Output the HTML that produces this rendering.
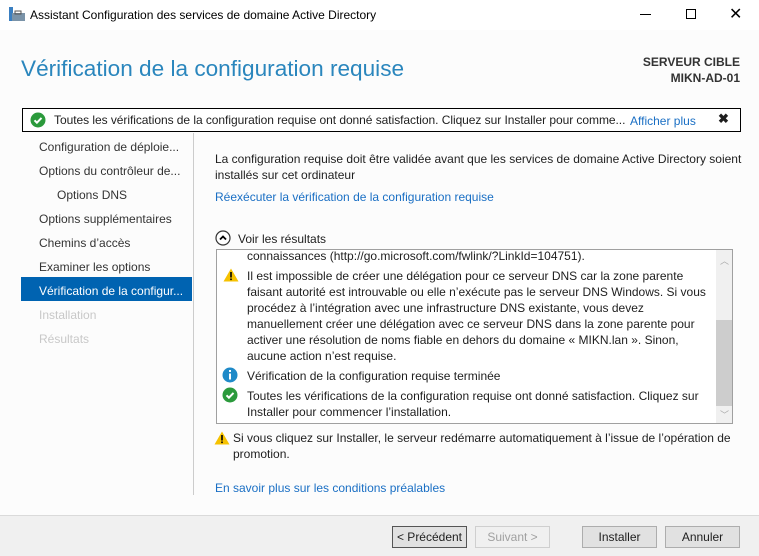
<!DOCTYPE html>
<html><head><meta charset="utf-8"><style>
*{margin:0;padding:0;box-sizing:border-box}
body{width:759px;height:556px;overflow:hidden;background:#fcfcfc;font-family:"Liberation Sans",sans-serif;font-size:12px;color:#1e1e1e;position:relative}
.a{position:absolute;white-space:nowrap}
.link{color:#1a6fc4}
.nav{position:absolute;left:39px;font-size:12px;color:#333}
.btn{position:absolute;top:526px;height:22px;border:1px solid #adadad;background:#e1e1e1;text-align:center;line-height:20px;font-size:12px}
.res{position:absolute;left:247px;font-size:12px;line-height:16px;color:#1e1e1e}
</style></head><body>
<div class="a" style="left:0;top:0;width:759px;height:30px;background:#fff"></div>
<svg class="a" style="left:9px;top:7px" width="18" height="16"><rect x="0" y="0" width="4" height="14" fill="#3a7fc1"/><rect x="3" y="6" width="13" height="8" fill="#7a93a8"/><rect x="6" y="4" width="6" height="3" fill="none" stroke="#555" stroke-width="1"/></svg>
<div class="a" style="left:30px;top:8px;font-size:12px;color:#000">Assistant Configuration des services de domaine Active Directory</div>
<div class="a" style="left:640px;top:14px;width:11px;height:1px;background:#000"></div>
<div class="a" style="left:686px;top:9px;width:10px;height:10px;border:1px solid #000"></div>
<div class="a" style="left:729px;top:4px;font-size:16px;color:#000">✕</div>

<div class="a" style="left:21px;top:56px;font-size:22.6px;color:#2a86bd">Vérification de la configuration requise</div>
<div class="a" style="right:19px;top:54px;font-weight:bold;color:#333;text-align:right;line-height:16px">SERVEUR CIBLE<br>MIKN-AD-01</div>

<div class="a" style="left:22px;top:108px;width:719px;height:24px;border:1px solid #000;background:#fff"></div>
<svg class="a" style="left:30px;top:112px" width="16" height="16"><circle cx="8" cy="8" r="7.5" fill="#2b9a3c"/><path d="M4.5 8.3l2.4 2.4 4.6-4.8" stroke="#fff" stroke-width="2" fill="none"/></svg>
<div class="a" style="left:54px;top:113px;letter-spacing:-0.05px">Toutes les vérifications de la configuration requise ont donné satisfaction. Cliquez sur Installer pour comme...</div>
<div class="a link" style="left:629px;top:114px;background:#fff;padding-left:1px">Afficher plus</div>
<div class="a" style="left:718px;top:111px;font-size:13px;font-weight:bold">✖</div>

<div class="nav" style="top:140px">Configuration de déploie...</div>
<div class="nav" style="top:164px">Options du contrôleur de...</div>
<div class="nav" style="top:188px;left:57px">Options DNS</div>
<div class="nav" style="top:212px">Options supplémentaires</div>
<div class="nav" style="top:236px">Chemins d’accès</div>
<div class="nav" style="top:260px">Examiner les options</div>
<div class="a" style="left:21px;top:277px;width:171px;height:24px;background:#0063b1"></div>
<div class="nav" style="top:284px;color:#fff">Vérification de la configur...</div>
<div class="nav" style="top:308px;color:#c8c8c8">Installation</div>
<div class="nav" style="top:332px;color:#c8c8c8">Résultats</div>
<div class="a" style="left:193px;top:133px;width:1px;height:362px;background:#ccc"></div>

<div class="a" style="left:215px;top:151px;line-height:16px;white-space:normal;width:530px">La configuration requise doit être validée avant que les services de domaine Active Directory soient installés sur cet ordinateur</div>
<div class="a link" style="left:215px;top:190px">Réexécuter la vérification de la configuration requise</div>

<svg class="a" style="left:215px;top:230px" width="16" height="16"><circle cx="8" cy="8" r="7" fill="#fff" stroke="#333" stroke-width="1.2"/><path d="M5 9.5l3-3 3 3" stroke="#000" stroke-width="1.8" fill="none"/></svg>
<div class="a" style="left:238px;top:232px">Voir les résultats</div>

<div class="a" style="left:216px;top:249px;width:517px;height:175px;border:1px solid #a0a0a0;background:#fff;overflow:hidden"></div>
<div class="a" style="left:716px;top:250px;width:16px;height:173px;background:#f0f0f0"></div>
<div class="a" style="left:716px;top:320px;width:16px;height:86px;background:#cdcdcd"></div>
<div class="a" style="left:720px;top:254px;font-size:9px;color:#aaa">︿</div>
<div class="a" style="left:720px;top:408px;font-size:9px;color:#aaa">﹀</div>
<div class="res" style="top:248px">connaissances (http://go.microsoft.com/fwlink/?LinkId=104751).</div>
<svg class="a" style="left:223px;top:268px" width="16" height="14"><path d="M8 0.5L15.5 13.5H0.5Z" fill="#f6c200"/><rect x="7.2" y="4" width="1.6" height="5.5" fill="#000"/><rect x="7.2" y="10.5" width="1.6" height="1.6" fill="#000"/></svg>
<div class="res" style="top:268px">Il est impossible de créer une délégation pour ce serveur DNS car la zone parente<br>faisant autorité est introuvable ou elle n’exécute pas le serveur DNS Windows. Si vous<br>procédez à l’intégration avec une infrastructure DNS existante, vous devez<br>manuellement créer une délégation avec ce serveur DNS dans la zone parente pour<br>activer une résolution de noms fiable en dehors du domaine « MIKN.lan ». Sinon,<br>aucune action n’est requise.</div>
<svg class="a" style="left:222px;top:367px" width="16" height="16"><circle cx="8" cy="8" r="7.5" fill="#1f8ac8"/><rect x="7" y="3" width="2" height="2" fill="#fff"/><rect x="7" y="6.5" width="2" height="6" fill="#fff"/></svg>
<div class="res" style="top:368px">Vérification de la configuration requise terminée</div>
<svg class="a" style="left:222px;top:387px" width="16" height="16"><circle cx="8" cy="8" r="7.5" fill="#2b9a3c"/><path d="M4.5 8.3l2.4 2.4 4.6-4.8" stroke="#fff" stroke-width="2" fill="none"/></svg>
<div class="res" style="top:388px">Toutes les vérifications de la configuration requise ont donné satisfaction. Cliquez sur<br>Installer pour commencer l’installation.</div>

<svg class="a" style="left:214px;top:431px" width="16" height="14"><path d="M8 0.5L15.5 13.5H0.5Z" fill="#f6c200"/><rect x="7.2" y="4" width="1.6" height="5.5" fill="#000"/><rect x="7.2" y="10.5" width="1.6" height="1.6" fill="#000"/></svg>
<div class="a" style="left:233px;top:430px;line-height:16px">Si vous cliquez sur Installer, le serveur redémarre automatiquement à l’issue de l’opération de<br>promotion.</div>
<div class="a link" style="left:215px;top:481px">En savoir plus sur les conditions préalables</div>

<div class="a" style="left:0;top:515px;width:759px;height:41px;background:#f0f0f0;border-top:1px solid #dadada"></div>
<div class="btn" style="left:392px;width:75px;border-color:#555">&lt; Précédent</div>
<div class="btn" style="left:475px;width:75px;background:#f0f0f0;border-color:#cfcfcf;color:#a0a0a0">Suivant &gt;</div>
<div class="btn" style="left:582px;width:75px">Installer</div>
<div class="btn" style="left:665px;width:75px">Annuler</div>
</body></html>
